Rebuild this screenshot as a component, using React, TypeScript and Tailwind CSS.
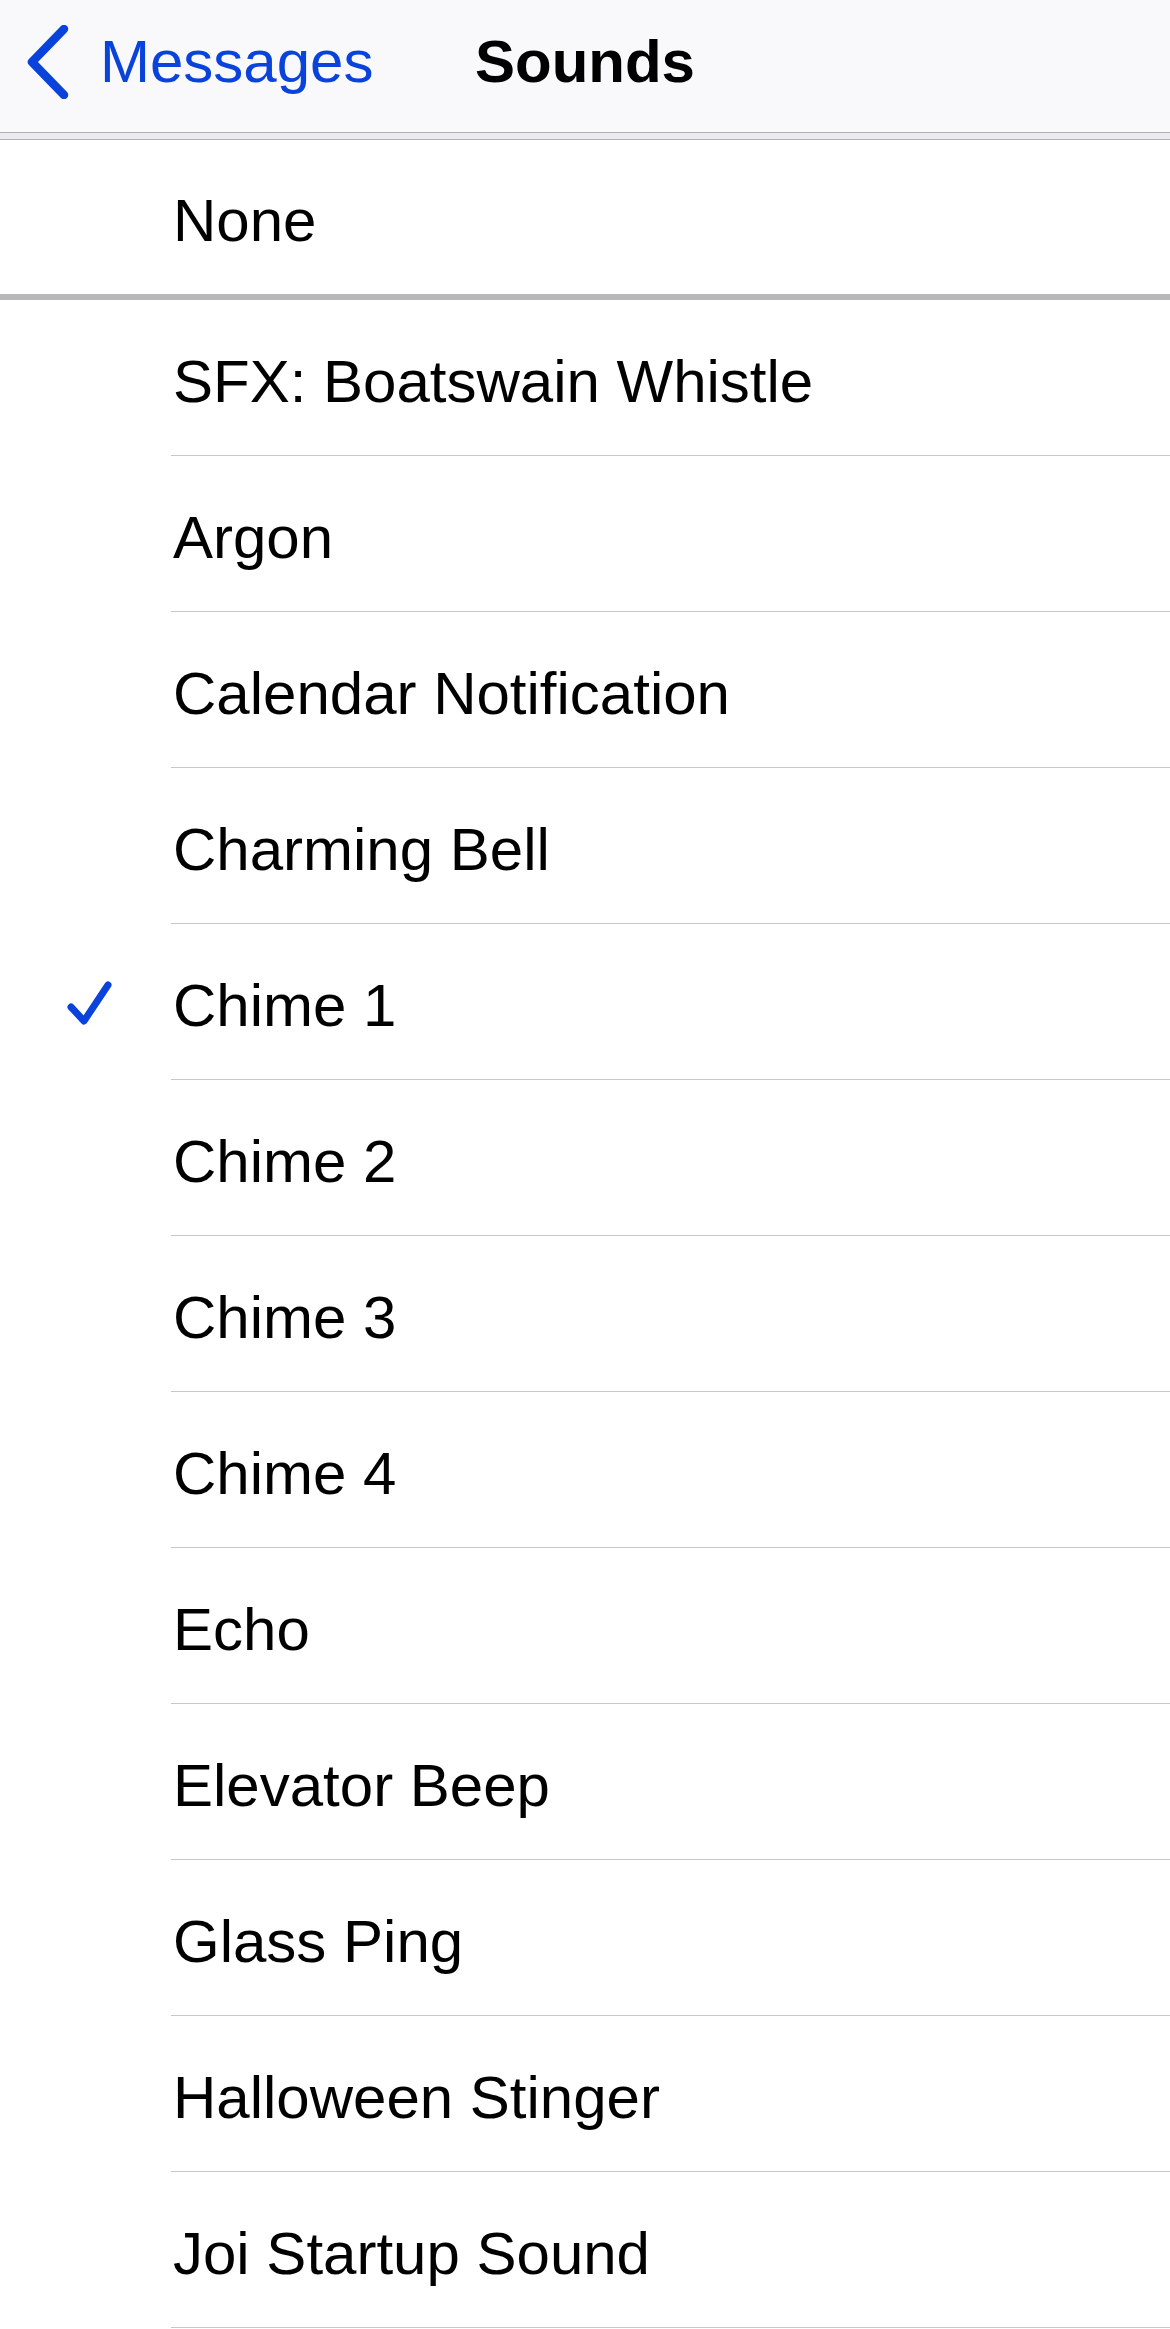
import React from "react";

const sounds = [
  "SFX: Boatswain Whistle",
  "Argon",
  "Calendar Notification",
  "Charming Bell",
  "Chime 1",
  "Chime 2",
  "Chime 3",
  "Chime 4",
  "Echo",
  "Elevator Beep",
  "Glass Ping",
  "Halloween Stinger",
  "Joi Startup Sound",
];

const selected = "Chime 1";

const Chevron = () => (
  <svg width="44" height="74" viewBox="0 0 44 74" fill="none">
    <path
      d="M37 4 L5 37 L37 70"
      stroke="#0a43dc"
      strokeWidth="8.5"
      strokeLinecap="round"
      strokeLinejoin="round"
    />
  </svg>
);

const Check = () => (
  <svg width="48" height="48" viewBox="0 0 48 48" fill="none">
    <path
      d="M5 27 L18 41 L42 5"
      stroke="#0a43dc"
      strokeWidth="7"
      strokeLinecap="round"
      strokeLinejoin="round"
    />
  </svg>
);

const App = () => {
  return (
    <div
      className="w-[1170px] min-h-[2329px] bg-white text-black"
      style={{ fontFamily: '"Liberation Sans", Arial, sans-serif' }}
    >
      {/* nav bar */}
      <div className="h-[132px] bg-[#f9f9fb] grid grid-cols-[1fr_auto_1fr] items-center pb-[8px]">
        <div className="flex items-center">
          <div className="pl-[27px] pr-[29px] flex items-center">
            <Chevron />
          </div>
          <span className="text-[60px] leading-none text-[#0a43dc]">Messages</span>
        </div>
        <div className="text-[60px] leading-none font-bold">Sounds</div>
        <div />
      </div>
      <div className="border-t border-[#b1b1b5]" />
      <div className="h-[6px] bg-[#ebebf0]" />
      <div className="border-t border-[#b1b1b5]" />

      {/* none row */}
      <div className="h-[154px] flex items-center pl-[173px] pt-[8px]">
        <span className="text-[60px] leading-none">None</span>
      </div>
      <div className="h-[6px] bg-[#b8b8bb]" />

      {/* sound list */}
      <div className="flex flex-col">
        {sounds.map((name) => (
          <div key={name} className="flex h-[156px]">
            <div className="w-[171px] flex items-center justify-center pl-[8px] pt-[4px]">
              {name === selected && <Check />}
            </div>
            <div className="flex-1 flex items-center border-b border-[#c8c8ca] pl-[2px] pt-[9px]">
              <span className="text-[60px] leading-none">{name}</span>
            </div>
          </div>
        ))}
      </div>
    </div>
  );
};

export default App;
